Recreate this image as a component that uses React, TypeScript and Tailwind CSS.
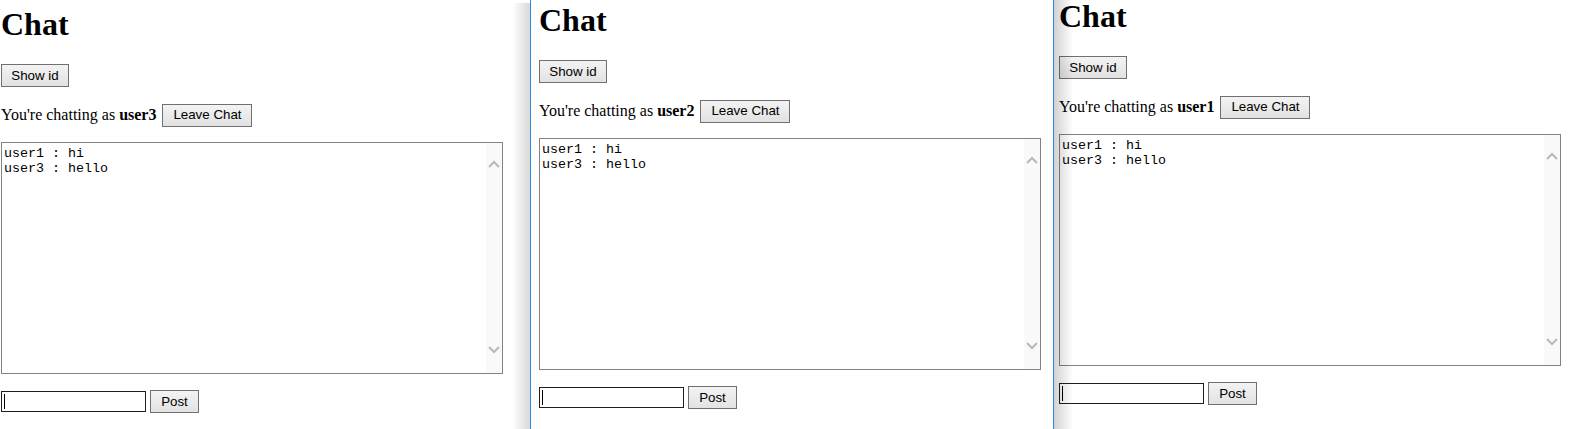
import { ReactNode } from 'react'

const serif = "font-['Liberation_Serif','Times_New_Roman',serif]"
const sans = "font-['Liberation_Sans',Arial,sans-serif]"
const mono = "font-['Liberation_Mono','Courier_New',monospace]"

const Btn = ({ children, className }: { children: ReactNode; className: string }) => (
    <button
        className={`h-[23px] shrink-0 border border-[#707070] bg-linear-to-b from-[#f3f3f3] to-[#e2e2e2] text-[13.33px] leading-none text-black ${sans} ${className}`}
    >
        {children}
    </button>
)

const Chevron = ({ up }: { up?: boolean }) => (
    <svg width="12" height="8" viewBox="0 0 12 8" className="block">
        <polyline
            points={up ? '1,7 6,2 11,7' : '1,1 6,6 11,1'}
            fill="none"
            stroke="#b8b8b8"
            strokeWidth="2"
        />
    </svg>
)

const ChatPanel = ({ user }: { user: string }) => (
    <div className="flex flex-col">
        <h1 className={`text-[32px] font-bold leading-[32px] text-black ${serif}`}>Chat</h1>

        <div className="mt-[24px] flex">
            <Btn className="w-[68px]">Show id</Btn>
        </div>

        <div className={`mt-[16px] flex items-center gap-[6px] text-[16px] text-black ${serif}`}>
            <span>
                You're chatting as <b>{user}</b>
            </span>
            <Btn className="w-[90px]">Leave Chat</Btn>
        </div>

        <div className="mt-[15px] flex h-[232px] w-[502px] border border-[#828282] bg-white">
            <pre className={`flex-1 pl-[2px] pt-[3px] text-[13.33px] leading-[15px] text-black ${mono}`}>
                {'user1 : hi\nuser3 : hello'}
            </pre>
            <div className="flex w-[16px] flex-col items-center justify-between bg-[#f9f9f9] pt-[17px] pb-[19px]">
                <Chevron up />
                <Chevron />
            </div>
        </div>

        <div className="mt-[16px] flex items-center gap-[4px]">
            <label className="flex h-[21px] w-[145px] items-center border border-[#1e1e1e] bg-white">
                <span className="ml-[2px] h-[15px] w-px bg-black" />
                <input className="h-full min-w-0 flex-1 bg-transparent outline-none" />
            </label>
            <Btn className="w-[49px]">Post</Btn>
        </div>
    </div>
)

export default function App() {
    return (
        <div className="flex h-[429px] w-[1569px] overflow-hidden bg-white">
            <div className="relative w-[530px] shrink-0 pl-[1px] pt-[8px]">
                <ChatPanel user="user3" />
                <div className="pointer-events-none absolute right-0 top-[3px] bottom-0 w-[18px] bg-linear-to-r from-transparent to-black/[0.15]" />
            </div>

            <div className="w-[524px] shrink-0 border-x border-[#2b8ae0] pl-[8px] pt-[4px]">
                <ChatPanel user="user2" />
            </div>

            <div className="relative flex-1 pl-[5px]">
                <ChatPanel user="user1" />
                <div className="pointer-events-none absolute left-0 top-0 bottom-0 w-[19px] bg-linear-to-r from-black/[0.18] to-transparent" />
            </div>
        </div>
    )
}
